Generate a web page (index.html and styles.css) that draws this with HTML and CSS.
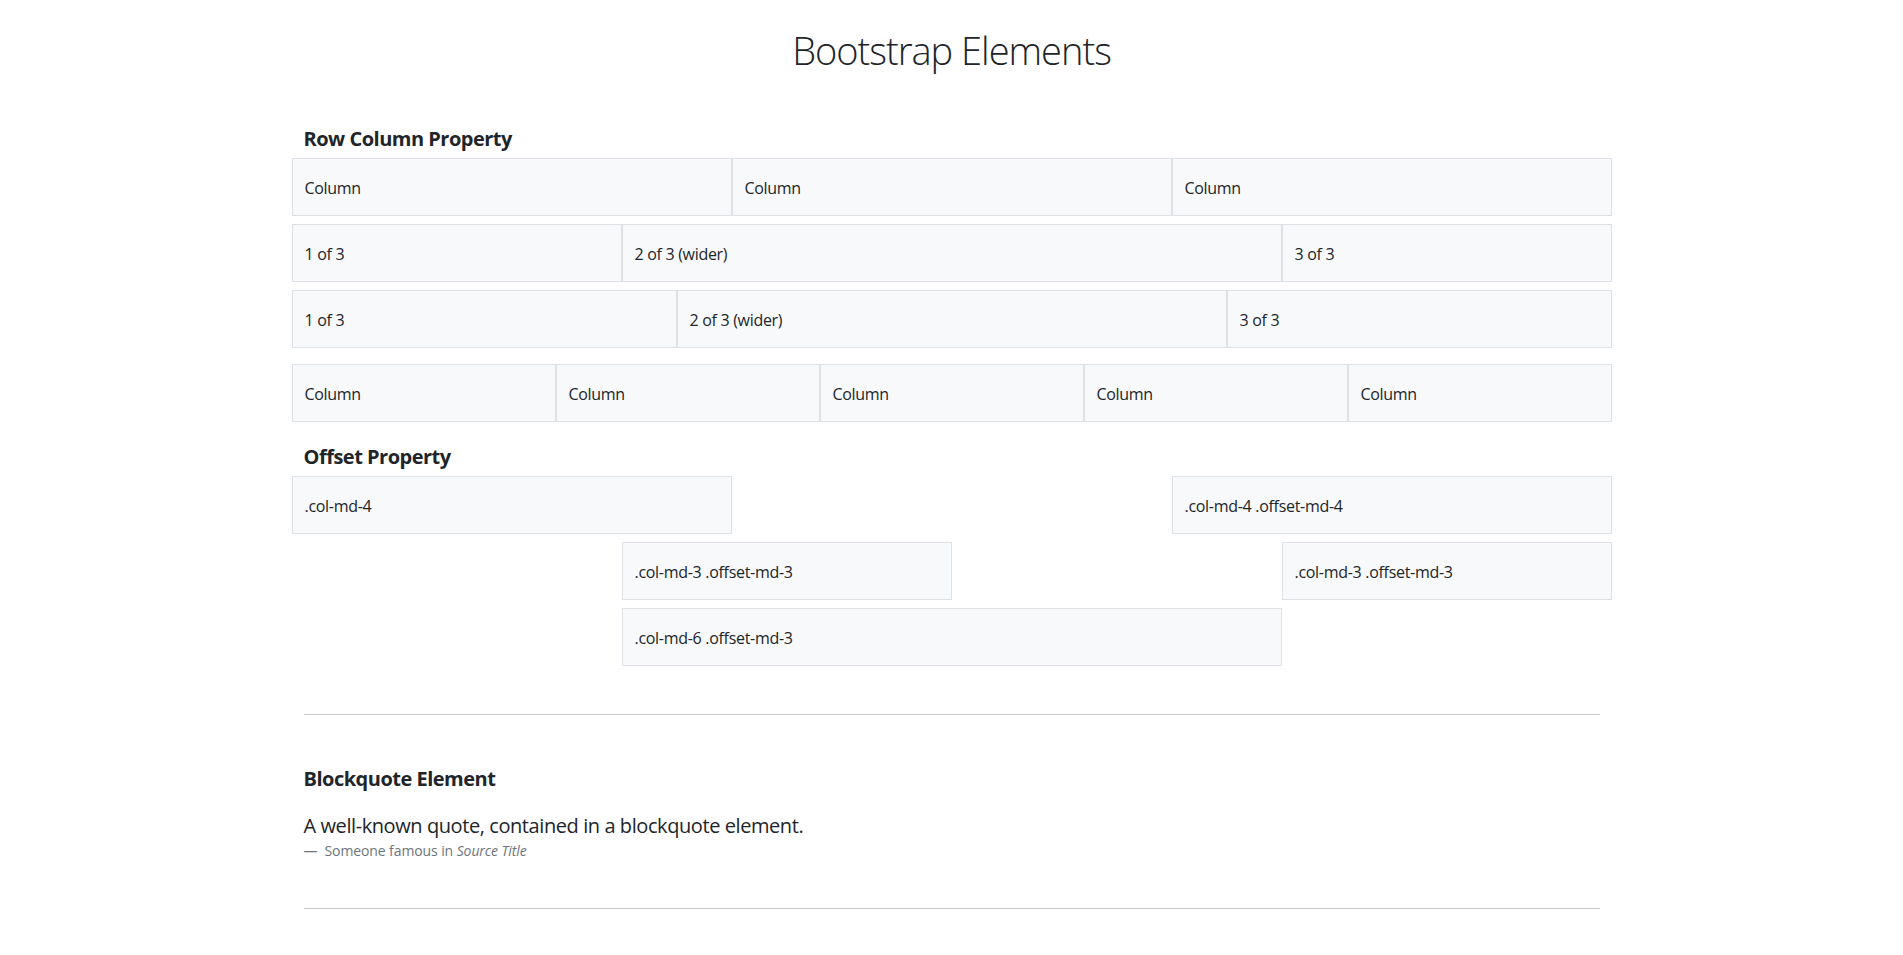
FILE: index.html
```html
<!DOCTYPE html>
<html lang="en">
<head>
<meta charset="utf-8">
<title>Bootstrap Elements</title>
<link rel="stylesheet" href="styles.css">
</head>
<body>
<h1 class="page-title">Bootstrap Elements</h1>
<main class="container">
  <section class="grid-section">
    <h5 class="section-title first">Row Column Property</h5>
    <div class="row">
      <div class="col c4">Column</div>
      <div class="col c4">Column</div>
      <div class="col c4">Column</div>
    </div>
    <div class="row">
      <div class="col c3">1 of 3</div>
      <div class="col c6">2 of 3 (wider)</div>
      <div class="col c3">3 of 3</div>
    </div>
    <div class="row row-gap-lg">
      <div class="col auto">1 of 3</div>
      <div class="col c5">2 of 3 (wider)</div>
      <div class="col auto">3 of 3</div>
    </div>
    <div class="row row-last">
      <div class="col auto">Column</div>
      <div class="col auto">Column</div>
      <div class="col auto">Column</div>
      <div class="col auto">Column</div>
      <div class="col auto">Column</div>
    </div>

    <h5 class="section-title offset-title">Offset Property</h5>
    <div class="row">
      <div class="col c4">.col-md-4</div>
      <div class="col c4 off4">.col-md-4 .offset-md-4</div>
    </div>
    <div class="row">
      <div class="col c3 off3">.col-md-3 .offset-md-3</div>
      <div class="col c3 off3">.col-md-3 .offset-md-3</div>
    </div>
    <div class="row row-last">
      <div class="col c6 off3">.col-md-6 .offset-md-3</div>
    </div>
  </section>

  <hr class="divider">

  <section class="quote-section">
    <h5 class="section-title quote-title">Blockquote Element</h5>
    <figure class="quote-figure">
      <blockquote class="blockquote">
        <p>A well-known quote, contained in a blockquote element.</p>
      </blockquote>
      <figcaption class="blockquote-footer">Someone famous in <cite title="Source Title">Source Title</cite></figcaption>
    </figure>
  </section>

  <hr class="divider">
</main>
</body>
</html>
```

FILE: styles.css
```css
* {
  box-sizing: border-box;
}

body {
  margin: 0;
  font-family: "Open Sans", "Noto Sans", "Liberation Sans", sans-serif;
  font-size: 16px;
  line-height: 24px;
  color: #212529;
  background: #fff;
}

.page-title {
  margin: 28px 0 0;
  font-size: 38px;
  font-weight: 300;
  line-height: 44px;
  letter-spacing: -1px;
  text-align: center;
}

.container {
  width: 1320px;
  margin: 0 auto;
  padding: 0 12px;
}

.section-title {
  margin: 0 0 7px;
  font-size: 20px;
  font-weight: 700;
  line-height: 24px;
  letter-spacing: -0.5px;
}

.section-title.first {
  margin-top: 55px;
}

.section-title.offset-title {
  margin-top: 23px;
}

.row {
  display: flex;
  margin: 0 -12px 8px;
}

.row.row-gap-lg {
  margin-bottom: 16px;
}

.row.row-last {
  margin-bottom: 0;
}

.col {
  padding: 17px 12px 15px;
  background: #f8f9fa;
  border: 1px solid #dee2e6;
  line-height: 24px;
  letter-spacing: -0.3px;
  white-space: nowrap;
}

.col.auto { flex: 1 1 0; min-width: 0; }
.col.c3 { flex: 0 0 25%; }
.col.c4 { flex: 0 0 33.333333%; }
.col.c5 { flex: 0 0 41.666667%; }
.col.c6 { flex: 0 0 50%; }

.off3 { margin-left: 25%; }
.off4 { margin-left: 33.333333%; }

.divider {
  margin: 48px 0 0;
  border: 0;
  border-top: 1px solid #c8c9ca;
  height: 0;
}

.section-title.quote-title {
  margin-top: 52px;
  margin-bottom: 20px;
}

.quote-figure {
  margin: 0;
}

.blockquote {
  margin: 0;
  font-size: 20px;
  line-height: 30px;
  letter-spacing: -0.42px;
}

.blockquote p {
  margin: 0;
}

.blockquote-footer {
  margin-top: -1px;
  font-size: 14px;
  line-height: 21px;
  color: #6c757d;
  letter-spacing: -0.1px;
}

.quote-section + .divider {
  margin-top: 47px;
}

.blockquote-footer::before {
  content: "\2014\00A0\00A0";
}
```
